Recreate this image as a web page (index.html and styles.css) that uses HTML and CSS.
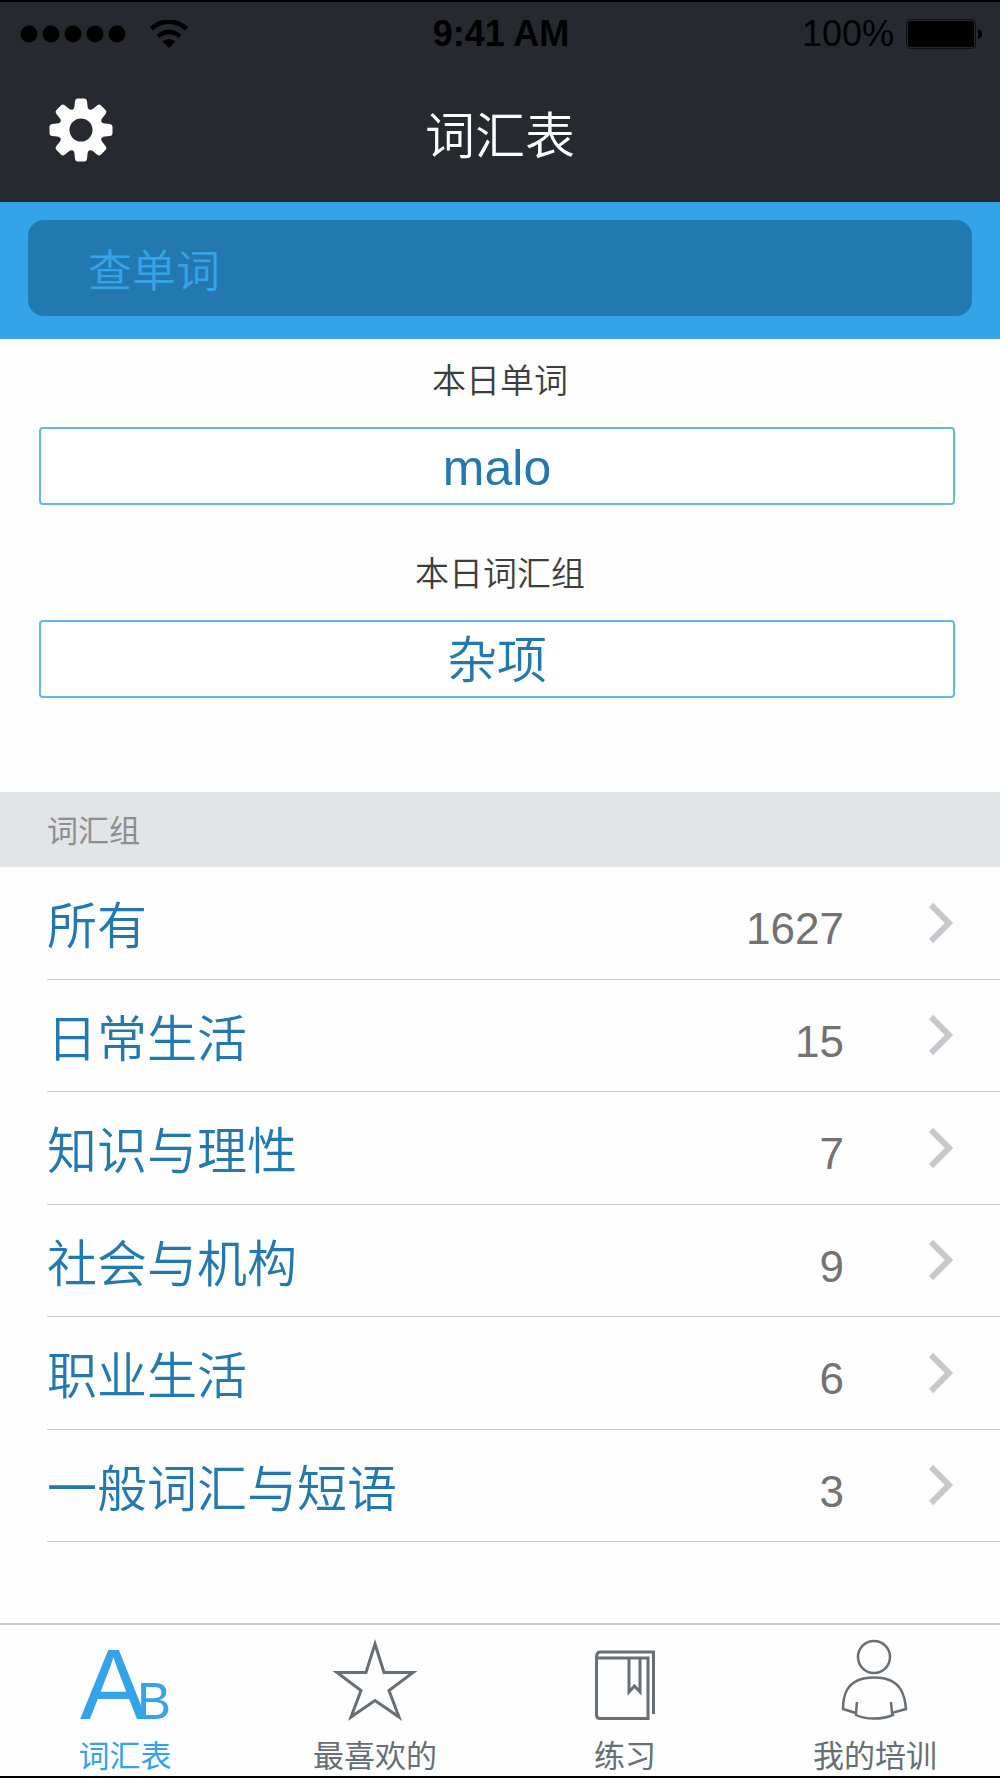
FILE: index.html
```html
<!DOCTYPE html>
<html lang="zh-CN">
<head>
<meta charset="utf-8">
<meta name="viewport" content="width=device-width, initial-scale=1">
<title>词汇表</title>
<link rel="stylesheet" href="styles.css">
</head>
<body class="app">
  <header class="header">
    <div class="status">
      <div class="status-left">
        <svg class="signal" viewBox="0 0 106 18" aria-hidden="true">
          <circle cx="9" cy="9" r="8.5"/><circle cx="31" cy="9" r="8.5"/><circle cx="53" cy="9" r="8.5"/><circle cx="75" cy="9" r="8.5"/><circle cx="97" cy="9" r="8.5"/>
        </svg>
        <svg class="wifi" viewBox="0 0 38 28" aria-hidden="true">
          <path d="M1.500 9A24.500 24.500 0 0 1 36.500 9M8 16.500A16 16 0 0 1 30 16.500" fill="none" stroke="#000" stroke-width="4.500"/>
          <path d="M19 28L12.500 21.500Q19 16.500 25.500 21.500Z"/>
        </svg>
      </div>
      <span class="status-time">9:41 AM</span>
      <div class="status-right">
        <span>100%</span>
        <svg class="battery" viewBox="0 0 76 32" aria-hidden="true">
          <rect x=".5" y="1.500" width="69" height="29" rx="4" fill="none" stroke="#0d0f12"/>
          <rect x="2" y="3" width="66" height="26" rx="2.500"/>
          <path d="M72 11Q76 12 76 16T72 21Z"/>
        </svg>
      </div>
    </div>
    <div class="navbar">
      <button class="settings" type="button" aria-label="设置">
        <svg class="gear" viewBox="-32 -32 64 64" aria-hidden="true">
          <g fill="#fff">
            <circle r="16.500" fill="none" stroke="#fff" stroke-width="10"/>
            <g id="teeth">
              <path id="tooth" d="M-10 -19Q-6.500 -21 -6.500 -24L-6 -29Q-5.500 -31.500 -3.500 -31.500H3.500Q5.500 -31.500 6 -29L6.500 -24Q6.500 -21 10 -19L7 -15H-7Z"/>
              <use href="#tooth" transform="rotate(45)"/>
              <use href="#tooth" transform="rotate(90)"/>
              <use href="#tooth" transform="rotate(135)"/>
            </g>
            <use href="#teeth" transform="rotate(180)"/>
          </g>
        </svg>
      </button>
      <h1 class="title">词汇表</h1>
    </div>
  </header>

  <form class="search" role="search">
    <input class="search-input" type="search" placeholder="查单词" aria-label="查单词">
  </form>

  <main class="main">
    <section class="daily">
      <h2 class="daily-label">本日单词</h2>
      <button class="daily-button" type="button">malo</button>
      <h2 class="daily-label">本日词汇组</h2>
      <button class="daily-button" type="button">杂项</button>
    </section>

    <h2 class="group-heading">词汇组</h2>
    <ul class="groups">
      <li class="group"><a class="group-link" href="#all"><span class="group-text"><span>所有</span><span class="count">1627</span></span><svg class="chevron" viewBox="0 0 24 40" aria-hidden="true"><path d="M2 2L20 20L2 38"/></svg></a></li>
      <li class="group"><a class="group-link" href="#daily-life"><span class="group-text"><span>日常生活</span><span class="count">15</span></span><svg class="chevron" viewBox="0 0 24 40" aria-hidden="true"><path d="M2 2L20 20L2 38"/></svg></a></li>
      <li class="group"><a class="group-link" href="#knowledge"><span class="group-text"><span>知识与理性</span><span class="count">7</span></span><svg class="chevron" viewBox="0 0 24 40" aria-hidden="true"><path d="M2 2L20 20L2 38"/></svg></a></li>
      <li class="group"><a class="group-link" href="#society"><span class="group-text"><span>社会与机构</span><span class="count">9</span></span><svg class="chevron" viewBox="0 0 24 40" aria-hidden="true"><path d="M2 2L20 20L2 38"/></svg></a></li>
      <li class="group"><a class="group-link" href="#work"><span class="group-text"><span>职业生活</span><span class="count">6</span></span><svg class="chevron" viewBox="0 0 24 40" aria-hidden="true"><path d="M2 2L20 20L2 38"/></svg></a></li>
      <li class="group"><a class="group-link" href="#phrases"><span class="group-text"><span>一般词汇与短语</span><span class="count">3</span></span><svg class="chevron" viewBox="0 0 24 40" aria-hidden="true"><path d="M2 2L20 20L2 38"/></svg></a></li>
    </ul>
  </main>

  <nav class="tabs">
    <a class="tab tab-active" href="#vocabulary" aria-current="page">
      <svg class="tab-icon" viewBox="0 0 90 80" aria-hidden="true"><text class="mark" x="0" y="79" font-size="100">A</text><text class="mark" x="57" y="79" font-size="51">B</text></svg>
      <span>词汇表</span>
    </a>
    <a class="tab" href="#favorites">
      <svg class="tab-icon" viewBox="0 0 90 80" aria-hidden="true"><path d="M45 4L54 32.500H83L59 50.500L69 77L45 60.500L21 77L31 50.500L7 32.500H36Z" stroke-width="3"/></svg>
      <span>最喜欢的</span>
    </a>
    <a class="tab" href="#practice">
      <svg class="tab-icon" viewBox="0 0 90 80" aria-hidden="true"><path d="M16.500 17V75Q16.500 78.500 20 78.500H68V18H17M16.500 18Q16.500 12 20 12H73.500V74M49 18V52L54.500 46L60 52V18" stroke-width="3"/></svg>
      <span>练习</span>
    </a>
    <a class="tab" href="#training">
      <svg class="tab-icon" viewBox="0 0 90 80" aria-hidden="true"><circle cx="44" cy="17" r="16" stroke-width="2.500"/><path d="M27 62L26 73L13 69Q13 57 17 50Q24 37.500 44 37.500T71 50Q75 57 76 69L62 73L61 62M26 73V75Q33 78.500 44 78.500T63 75L62 73" stroke-width="2.500"/></svg>
      <span>我的培训</span>
    </a>
  </nav>
</body>
</html>
```
FILE: styles.css
```css
* {
  box-sizing: border-box;
}

.app {
  --latin: "Liberation Sans", "Noto Sans CJK SC", sans-serif;
  --cjk: "Noto Sans CJK SC", sans-serif;
  --blue: #35a3e7;
  --deep-blue: #2379af;
  display: flex;
  flex-direction: column;
  min-height: 100vh;
  margin: 0;
  border-top: 2px solid #000;
  border-bottom: 2px solid #000;
  background: #fefefe;
  font-family: var(--cjk);
  font-weight: 350;
}

.header {
  background: #262930;
}

.status {
  display: grid;
  grid-template-columns: 1fr auto 1fr;
  align-items: center;
  height: 64px;
  padding: 0 18px 0 20px;
  color: #000;
  font: 36px/40px var(--latin);
}

.status-time {
  font-weight: 700;
}

.status-left,
.status-right {
  display: flex;
  align-items: center;
}

.status-left {
  gap: 24px;
}

.status-right {
  justify-content: flex-end;
  gap: 12px;
}

.signal {
  width: 106px;
  height: 18px;
}

.wifi {
  width: 38px;
  height: 28px;
}

.battery {
  width: 76px;
  height: 32px;
}

.navbar {
  display: grid;
  grid-template-columns: 1fr auto 1fr;
  align-items: center;
  height: 136px;
  padding: 0 49px 8px;
}

.settings {
  justify-self: start;
  padding: 0;
  border: 0;
  background: none;
}

.gear {
  display: block;
  width: 64px;
  height: 64px;
}

.title {
  margin: 0;
  padding-top: 4px;
  color: #fff;
  font-size: 50px;
  line-height: 60px;
  font-weight: 350;
}

.search {
  padding: 18px 28px 23px;
  background: var(--blue);
}

.search-input {
  display: block;
  width: 100%;
  height: 96px;
  padding: 0 60px;
  border: 0;
  border-radius: 16px;
  background: var(--deep-blue);
  color: #fff;
  font-family: var(--cjk);
  font-size: 44px;
  font-weight: 350;
  appearance: none;
}

.search-input::placeholder {
  color: var(--blue);
  opacity: 1;
}

.main {
  display: flex;
  flex: 1;
  flex-direction: column;
}

.daily {
  display: flex;
  flex-direction: column;
  padding: 20px 0 94px;
}

.daily-label {
  margin: 0 0 28px;
  color: #3d3d3d;
  font-size: 34px;
  line-height: 40px;
  font-weight: 350;
  text-align: center;
}

.daily-button {
  height: 78px;
  margin: 0 45px 0 39px;
  padding: 4px 0 0;
  border: 2px solid #62b7ec;
  border-radius: 4px;
  background: #fff;
  color: var(--deep-blue);
  font: 350 50px/60px var(--latin);
}

.daily-button + .daily-label {
  margin-top: 47px;
}

.group-heading {
  margin: 0;
  padding: 17px 47px 18px;
  background: #e1e5e8;
  color: #8e8e8e;
  font-size: 31px;
  line-height: 40px;
  font-weight: 400;
}

.groups {
  display: flex;
  flex: 1;
  flex-direction: column;
  margin: 0;
  padding: 0 0 81px 47px;
  list-style: none;
}

.group {
  display: flex;
  flex: 1;
  min-height: 96px;
  border-bottom: 1px solid #c8c8cb;
}

.group-link {
  display: flex;
  flex: 1;
  align-items: center;
  gap: 85px;
  padding-right: 47px;
  color: var(--deep-blue);
  font-size: 50px;
  line-height: 60px;
  text-decoration: none;
}

.group-text {
  display: flex;
  flex: 1;
  align-items: baseline;
  justify-content: space-between;
  padding-top: 6px;
}

.count {
  color: #727272;
  font: 44px/60px var(--latin);
}

.chevron {
  width: 24px;
  height: 40px;
  fill: none;
  stroke: #c7c7cc;
  stroke-width: 6px;
}

.tabs {
  display: grid;
  grid-template-columns: repeat(4, 1fr);
  border-top: 2px solid #c8c8c8;
}

.tab {
  display: flex;
  flex-direction: column;
  align-items: center;
  gap: 14px;
  padding: 15px 0 2px;
  color: #666f75;
  font-size: 31px;
  line-height: 40px;
  font-weight: 400;
  text-decoration: none;
}

.tab-active {
  color: var(--blue);
}

.tab-icon {
  width: 90px;
  height: 80px;
  overflow: visible;
  fill: none;
  stroke: currentColor;
}

.mark {
  fill: currentColor;
  stroke: none;
  font-family: var(--latin);
}
```
